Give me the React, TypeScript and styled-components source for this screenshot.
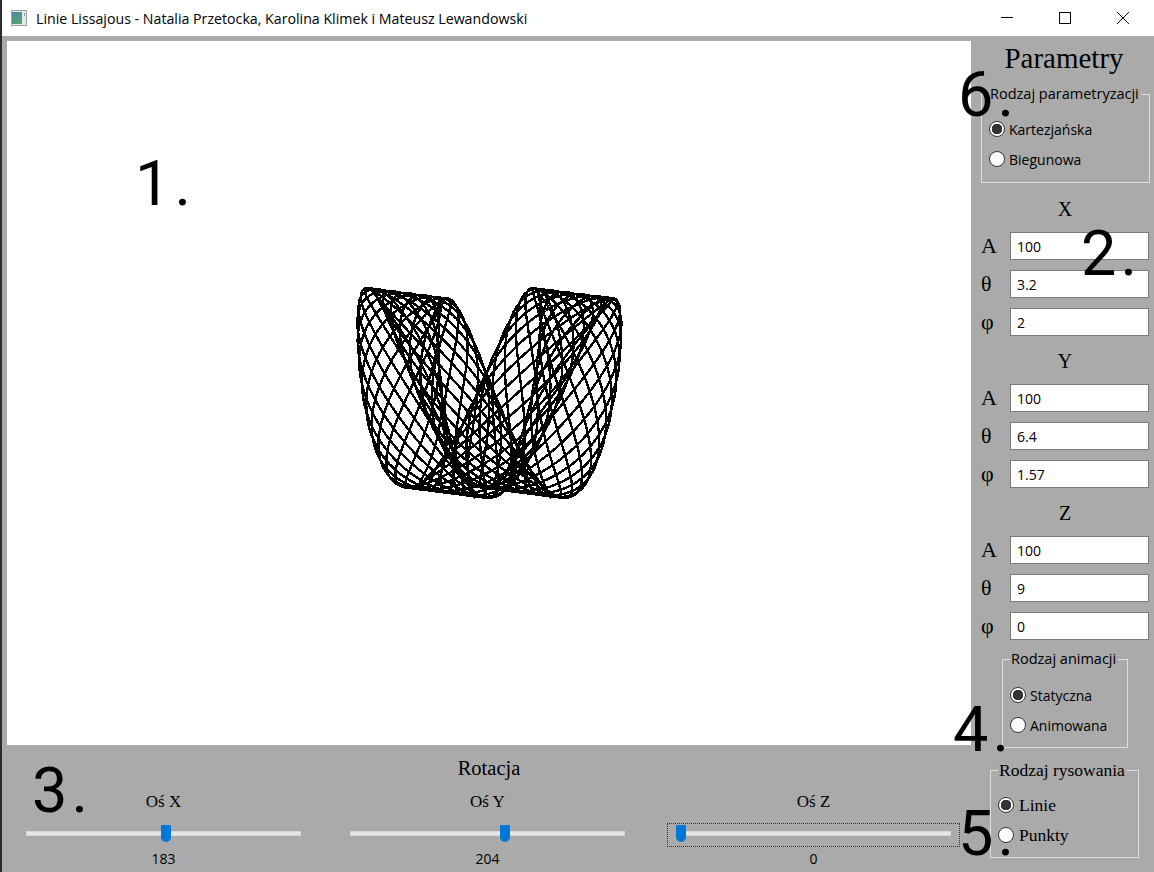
import React from 'react';
import styled, { createGlobalStyle } from 'styled-components';

const GlobalStyle = createGlobalStyle`
  html, body {
    margin: 0;
    padding: 0;
    background: #aaaaaa;
  }
  * {
    box-sizing: border-box;
  }
`;

const SANS = `"Open Sans", "Noto Sans", sans-serif`;
const SERIF = `"Liberation Serif", "DejaVu Serif", serif`;

const Frame = styled.div`
  position: relative;
  width: 1154px;
  height: 872px;
  padding-left: 2px;
  background: #2b2b2b;
  overflow: hidden;
  font-family: ${SANS};
  color: #000;
`;

const TitleBar = styled.header`
  display: flex;
  align-items: center;
  height: 36px;
  padding-left: 9px;
  background: #fff;
`;

const AppTitle = styled.span`
  margin-left: 9px;
  font-size: 14.2px;
  white-space: nowrap;
`;

const WindowControls = styled.div`
  display: flex;
  margin-left: auto;
  margin-right: 2px;
`;

const ControlButton = styled.div`
  display: flex;
  align-items: center;
  justify-content: center;
  width: 58px;
  height: 36px;
`;

const Body = styled.div`
  display: grid;
  grid-template-columns: 969px 183px;
  height: 836px;
  background: #aaaaaa;
`;

const MainColumn = styled.div`
  display: flex;
  flex-direction: column;
  padding: 5px 0 0 5px;
`;

const Canvas = styled.div`
  width: 964px;
  height: 704px;
  background: #fff;
`;

const RotationPanel = styled.section`
  display: flex;
  flex-direction: column;
`;

const RotationTitle = styled.div`
  height: 46px;
  padding-top: 13px;
  text-align: center;
  font-family: ${SERIF};
  font-size: 20.5px;
  line-height: 20px;
`;

const SliderRow = styled.div`
  display: grid;
  grid-template-columns: 324px 326px 293px;
  padding-left: 10px;
`;

const SliderColumn = styled.div`
  display: flex;
  flex-direction: column;
  align-items: center;
  width: 293px;
`;

const AxisName = styled.div`
  height: 22px;
  font-family: ${SERIF};
  font-size: 17px;
  line-height: 22px;
`;

const SliderBox = styled.div<{ $focused?: boolean }>`
  width: 293px;
  height: 24px;
  margin-top: 10px;
  padding: 7px 8px 0;
  border: 1px dotted ${(p) => (p.$focused ? '#333' : 'transparent')};
`;

const Track = styled.div`
  position: relative;
  width: 275px;
  height: 5px;
  background: #e7e7e7;
  border: 1px solid #d6d6d6;
`;

const Thumb = styled.div`
  position: absolute;
  top: -7px;
  width: 10px;
  height: 17px;
  background: #0078d7;
  border-radius: 1px 1px 5px 5px;
`;

const SliderValue = styled.div`
  margin-top: 2px;
  font-size: 14px;
  line-height: 20px;
`;

const Sidebar = styled.aside`
  display: flex;
  flex-direction: column;
  padding-left: 10px;
`;

const PanelTitle = styled.h1`
  width: 166px;
  height: 49px;
  margin: 0;
  padding-top: 6px;
  text-align: center;
  font-family: ${SERIF};
  font-size: 29px;
  font-weight: normal;
  line-height: 32px;
`;

const Group = styled.fieldset<{ $left?: number; $width: number; $top?: number; $height: number; $inset: number }>`
  width: ${(p) => p.$width}px;
  height: ${(p) => p.$height}px;
  margin: ${(p) => p.$top ?? 0}px 0 0 ${(p) => p.$left ?? 0}px;
  padding: ${(p) => p.$inset}px 0 0 7px;
  border: 1px solid #dedede;
  min-width: 0;
`;

const GroupLegend = styled.legend<{ $serif?: boolean }>`
  padding: 0 2px 0 1px;
  font-family: ${(p) => (p.$serif ? SERIF : SANS)};
  font-size: ${(p) => (p.$serif ? 17.5 : 14.5)}px;
  line-height: 18px;
  white-space: nowrap;
`;

const RadioRow = styled.label<{ $serif?: boolean }>`
  display: flex;
  align-items: center;
  gap: ${(p) => (p.$serif ? 5 : 4)}px;
  height: 30px;
  font-family: ${(p) => (p.$serif ? SERIF : SANS)};
  font-size: ${(p) => (p.$serif ? 17.5 : 14)}px;
`;

const RadioInput = styled.input`
  appearance: none;
  flex: none;
  width: 16px;
  height: 16px;
  margin: 0;
  border-radius: 50%;
  border: 1px solid #333;
  background: #fff;

  &:checked {
    background: radial-gradient(circle, #333 0 5px, #fff 5.5px);
  }
`;

const AxisStack = styled.div`
  padding-top: 1px;
`;

const AxisHeading = styled.div`
  width: 168px;
  height: 48px;
  text-align: center;
  font-family: ${SERIF};
  font-size: 20px;
  line-height: 50px;
`;

const FieldList = styled.div`
  display: flex;
  flex-direction: column;
  gap: 10px;
`;

const FieldRow = styled.div`
  display: grid;
  grid-template-columns: 29px 139px;
  align-items: center;
`;

const FieldLabel = styled.label`
  font-family: ${SERIF};
  font-size: 22px;
  line-height: 28px;
`;

const FieldInput = styled.input`
  width: 139px;
  height: 28px;
  padding: 0 6px;
  border: 1px solid #7a7a7a;
  border-radius: 0;
  background: #fff;
  font-family: ${SANS};
  font-size: 14px;
  color: #000;
  outline: none;
`;

// numery z opisu zrzutu, lezace na wierzchu kontrolek
const Marker = styled.span<{ $x: number; $y: number }>`
  position: absolute;
  left: ${(p) => p.$x}px;
  top: ${(p) => p.$y}px;
  font-family: Roboto, sans-serif;
  font-size: 63px;
  line-height: 63px;
  letter-spacing: 4px;
  pointer-events: none;
`;

const axes = [
  { name: 'X', values: ['100', '3.2', '2'] },
  { name: 'Y', values: ['100', '6.4', '1.57'] },
  { name: 'Z', values: ['100', '9', '0'] },
];

const symbols = ['A', 'θ', 'φ'];

const markers = [
  { text: '1.', x: 135, y: 152 },
  { text: '2.', x: 1081, y: 222 },
  { text: '3.', x: 32, y: 759 },
  { text: '4.', x: 953, y: 698 },
  { text: '5.', x: 958, y: 802 },
  { text: '6.', x: 958, y: 63 },
];

function curvePoints() {
  const rad = Math.PI / 180;
  const ax = 183 * rad;
  const ay = 204 * rad;
  const pts: string[] = [];
  const end = Math.PI * 10;
  for (let i = 0; i <= 14000; i++) {
    const t = (i / 14000) * end;
    const x = 100 * Math.sin(3.2 * t + 2);
    const y = 100 * Math.sin(6.4 * t + 1.57);
    const z = 100 * Math.sin(9 * t);
    const y1 = y * Math.cos(ax) - z * Math.sin(ax);
    const z1 = y * Math.sin(ax) + z * Math.cos(ax);
    const x2 = x * Math.cos(ay) + z1 * Math.sin(ay);
    pts.push(`${(481 + x2).toFixed(1)},${(352 + y1).toFixed(1)}`);
  }
  return pts.join(' ');
}

function AppIcon() {
  return (
    <svg width="16" height="16" viewBox="0 0 16 16">
      <defs>
        <linearGradient id="ico" x1="0" y1="0" x2="0.6" y2="1">
          <stop offset="0" stopColor="#4a86a8" />
          <stop offset="1" stopColor="#5da36e" />
        </linearGradient>
      </defs>
      <rect x="0.5" y="0.5" width="15" height="15" fill="#e4e8e8" stroke="#9aa3a8" />
      <rect x="1" y="2" width="10" height="12" fill="url(#ico)" />
      <rect x="13" y="3" width="1" height="3" fill="#7f9f9a" />
    </svg>
  );
}

function Slider({ name, value, focused }: { name: string; value: number; focused?: boolean }) {
  return (
    <SliderColumn>
      <AxisName>{name}</AxisName>
      <SliderBox $focused={focused}>
        <Track>
          <Thumb style={{ left: (value / 360) * 265 - 1 }} />
        </Track>
      </SliderBox>
      <SliderValue>{value}</SliderValue>
    </SliderColumn>
  );
}

function Radio({ label, checked, name, serif }: { label: string; checked?: boolean; name: string; serif?: boolean }) {
  return (
    <RadioRow $serif={serif}>
      <RadioInput type="radio" name={name} defaultChecked={checked} />
      {label}
    </RadioRow>
  );
}

export default function App() {
  return (
    <Frame>
      <GlobalStyle />
      <TitleBar>
        <AppIcon />
        <AppTitle>Linie Lissajous - Natalia Przetocka, Karolina Klimek i Mateusz Lewandowski</AppTitle>
        <WindowControls>
          <ControlButton>
            <svg width="12" height="12" viewBox="0 0 12 12">
              <path d="M0 5.5h12" stroke="#000" fill="none" />
            </svg>
          </ControlButton>
          <ControlButton>
            <svg width="12" height="12" viewBox="0 0 12 12">
              <rect x="0.5" y="0.5" width="11" height="11" stroke="#000" fill="none" />
            </svg>
          </ControlButton>
          <ControlButton>
            <svg width="12" height="12" viewBox="0 0 12 12">
              <path d="M0 0l12 12M12 0L0 12" stroke="#000" fill="none" />
            </svg>
          </ControlButton>
        </WindowControls>
      </TitleBar>
      <Body>
        <MainColumn>
          <Canvas>
            <svg width="964" height="704">
              <polyline
                points={curvePoints()}
                fill="none"
                stroke="#000"
                strokeWidth="2.4"
                shapeRendering="crispEdges"
              />
            </svg>
          </Canvas>
          <RotationPanel>
            <RotationTitle>Rotacja</RotationTitle>
            <SliderRow>
              <Slider name="Oś X" value={183} />
              <Slider name="Oś Y" value={204} />
              <Slider name="Oś Z" value={0} focused />
            </SliderRow>
          </RotationPanel>
        </MainColumn>
        <Sidebar>
          <PanelTitle>Parametry</PanelTitle>
          <Group $width={169} $height={98} $inset={11}>
            <GroupLegend>Rodzaj parametryzacji</GroupLegend>
            <Radio name="param" label="Kartezjańska" checked />
            <Radio name="param" label="Biegunowa" />
          </Group>
          <AxisStack>
            {axes.map((axis) => (
              <div key={axis.name}>
                <AxisHeading>{axis.name}</AxisHeading>
                <FieldList>
                  {axis.values.map((v, i) => (
                    <FieldRow key={symbols[i]}>
                      <FieldLabel>{symbols[i]}</FieldLabel>
                      <FieldInput defaultValue={v} />
                    </FieldRow>
                  ))}
                </FieldList>
              </div>
            ))}
          </AxisStack>
          <Group $left={21} $top={10} $width={126} $height={98} $inset={12}>
            <GroupLegend>Rodzaj animacji</GroupLegend>
            <Radio name="anim" label="Statyczna" checked />
            <Radio name="anim" label="Animowana" />
          </Group>
          <Group $left={9} $top={13} $width={149} $height={97} $inset={11}>
            <GroupLegend $serif>Rodzaj rysowania</GroupLegend>
            <Radio name="draw" label="Linie" checked serif />
            <Radio name="draw" label="Punkty" serif />
          </Group>
        </Sidebar>
      </Body>
      {markers.map((m) => (
        <Marker key={m.text} $x={m.x} $y={m.y}>
          {m.text}
        </Marker>
      ))}
    </Frame>
  );
}
